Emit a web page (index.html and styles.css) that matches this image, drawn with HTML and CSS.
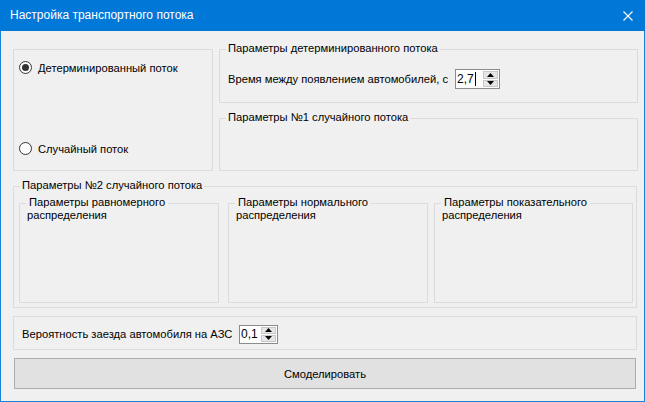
FILE: index.html
```html
<!DOCTYPE html>
<html lang="ru">
<head>
<meta charset="utf-8">
<title>Настройка транспортного потока</title>
<link rel="stylesheet" href="styles.css">
</head>
<body>
<div class="window">
  <div class="titlebar">
    <span class="title">Настройка транспортного потока</span>
    <span class="close"><svg width="10" height="10" viewBox="0 0 10 10"><path d="M0.5 0.5L9.5 9.5M9.5 0.5L0.5 9.5" stroke="#fff" stroke-width="1.1" fill="none"/></svg></span>
  </div>
  <div class="body">
    <div class="row-top">
      <div class="radio-box">
        <div class="radio checked"><span class="circle"><span class="dot"></span></span><span>Детерминированный поток</span></div>
        <div class="radio"><span class="circle"></span><span>Случайный поток</span></div>
      </div>
      <div class="right-col">
        <div class="group g-det">
          <div class="gtitle">Параметры детерминированного потока</div>
          <div class="field f-det">
            <span class="flabel l-det">Время между появлением автомобилей, с</span>
            <div class="spin s-det">
              <span class="spin-val">2,7<span class="caret"></span></span>
              <span class="spin-btns">
                <span class="sbtn"><svg width="7" height="4" viewBox="0 0 7 4"><path d="M3.5 0L7 4H0Z" fill="#000"/></svg></span>
                <span class="sbtn"><svg width="7" height="4" viewBox="0 0 7 4"><path d="M0 0H7L3.5 4Z" fill="#000"/></svg></span>
              </span>
            </div>
          </div>
        </div>
        <div class="group g-rand1">
          <div class="gtitle">Параметры №1 случайного потока</div>
        </div>
      </div>
    </div>
    <div class="group g-rand2">
      <div class="gtitle">Параметры №2 случайного потока</div>
      <div class="inner-row">
        <div class="group inner i1"><div class="gtitle two">Параметры равномерного<br>распределения</div></div>
        <div class="group inner i2"><div class="gtitle two">Параметры нормального<br>распределения</div></div>
        <div class="group inner i3"><div class="gtitle two">Параметры показательного<br>распределения</div></div>
      </div>
    </div>
    <div class="group g-prob">
      <span class="flabel l-prob">Вероятность заезда автомобиля на АЗС</span>
      <div class="spin s-prob">
        <span class="spin-val">0,1</span>
        <span class="spin-btns">
          <span class="sbtn"><svg width="7" height="4" viewBox="0 0 7 4"><path d="M3.5 0L7 4H0Z" fill="#000"/></svg></span>
          <span class="sbtn"><svg width="7" height="4" viewBox="0 0 7 4"><path d="M0 0H7L3.5 4Z" fill="#000"/></svg></span>
        </span>
      </div>
    </div>
    <div class="button">Смоделировать</div>
  </div>
</div>
</body>
</html>
```

FILE: styles.css
```css
* { box-sizing: border-box; }
html, body { margin: 0; padding: 0; }
body {
  font-family: "Liberation Sans", Arial, sans-serif;
  font-size: 11.2px;
  color: #000;
  background: #f0f0f0;
}
.window {
  width: 645px;
  height: 402px;
  display: flex;
  flex-direction: column;
  background: #f0f0f0;
}
.titlebar {
  height: 31px;
  flex: none;
  background: #0078d7;
  color: #fff;
  display: flex;
  align-items: center;
  justify-content: space-between;
  padding-left: 10px;
  font-size: 12px;
}
.title { line-height: 15px; }
.close { display: flex; margin-right: 12px; }
.body {
  flex: 1;
  border: 1px solid #1883d7;
  border-top: 0;
  padding: 11px 6px 0 12px;
}
.row-top { display: flex; }
.radio-box {
  margin-top: 7px;
  width: 200px;
  height: 122px;
  border: 1px solid #dcdcdc;
  padding: 11px 0 0 5px;
  display: flex;
  flex-direction: column;
  gap: 68px;
}
.radio { display: flex; align-items: center; height: 13px; white-space: nowrap; }
.circle {
  width: 13px;
  height: 13px;
  border: 1px solid #333;
  border-radius: 50%;
  background: #fff;
  margin-right: 6px;
  display: flex;
  align-items: center;
  justify-content: center;
}
.dot { width: 7px; height: 7px; border-radius: 50%; background: #333; }
.right-col { margin-left: 6px; width: 419px; }
.group { border: 1px solid #dcdcdc; }
.gtitle {
  width: fit-content;
  margin: -8px 0 0 6px;
  padding: 0 2px;
  line-height: 13px;
  background: #f0f0f0;
  white-space: nowrap;
}
.gtitle.two { padding: 0 3px 0 1px; text-indent: 2px; }
.g-det { margin-top: 7px; height: 54px; }
.g-rand1 { margin-top: 15px; height: 53px; }
.field { display: flex; align-items: center; }
.f-det { margin-top: 14px; padding-left: 8px; }
.flabel { flex: none; white-space: nowrap; }
.l-det { width: 227px; }
.spin {
  display: flex;
  background: #fff;
  border: 1px solid #8c8c8c;
}
.s-det { width: 45px; height: 20px; }
.s-prob { width: 39px; height: 19px; }
.spin-val { flex: 1; display: flex; align-items: center; padding-left: 1px; line-height: 14px; font-size: 12px; }
.caret { width: 1px; height: 14px; background: #000; margin-left: 1px; }
.spin-btns {
  width: 16px;
  display: flex;
  flex-direction: column;
  padding: 1px 1px 1px 0;
  gap: 1px;
}
.sbtn {
  flex: 1;
  background: #e6e6e6;
  border: 1px solid #c8c8c8;
  display: flex;
  align-items: center;
  justify-content: center;
}
.g-rand2 { margin-top: 15px; width: 624px; height: 122px; }
.inner-row { display: flex; margin-top: 11px; padding-left: 5px; }
.inner { height: 100px; }
.i1 { width: 200px; }
.i2 { width: 200px; margin-left: 9px; }
.i3 { width: 199px; margin-left: 6px; }
.g-prob {
  margin-top: 8px;
  width: 624px;
  height: 34px;
  display: flex;
  align-items: center;
  padding: 2px 0 0 8px;
}
.l-prob { width: 217px; }
.button {
  margin: 8px 0 0 1px;
  width: 622px;
  height: 31px;
  border: 1px solid #adadad;
  background: #e1e1e1;
  display: flex;
  align-items: center;
  justify-content: center;
}
```
